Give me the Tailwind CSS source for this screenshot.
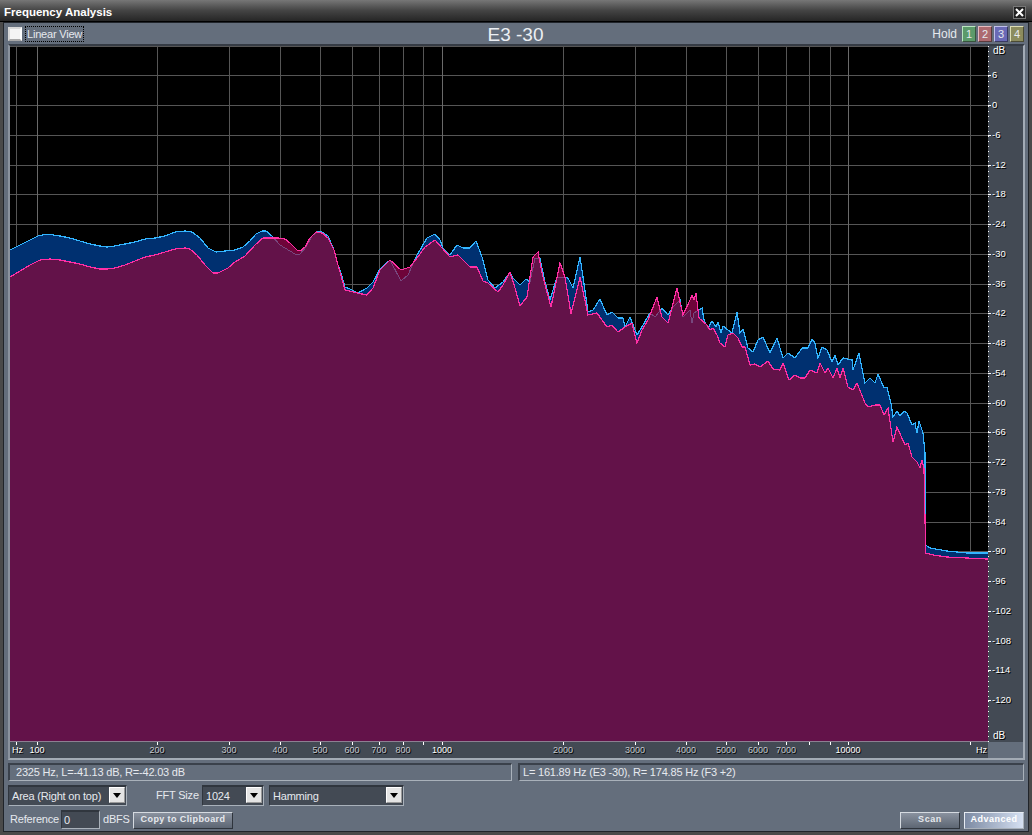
<!DOCTYPE html>
<html lang="en">
<head>
  <meta charset="UTF-8" />
  <title>Frequency Analysis</title>
  <script src="https://cdn.jsdelivr.net/npm/@tailwindcss/browser@4"></script>
</head>
<body class="w-[1032px] h-[835px] overflow-hidden flex flex-col bg-[#4a4a4a] text-[11px] tracking-[-0.2px] whitespace-nowrap text-[#e6e9ee] font-['Liberation_Sans',sans-serif]">

  <!-- Title bar -->
  <header class="h-[22px] shrink-0 flex items-center justify-between pl-[4px] pr-[6px] pt-[4px] bg-linear-to-b from-[#777777] via-[#444444] to-[#262626] border-b border-black">
    <h1 class="font-bold text-[11.5px] tracking-normal text-white">Frequency Analysis</h1>
    <button class="w-[13px] h-[13px] -mt-[1px] flex items-center justify-center bg-[#222222] border border-[#777777]">
      <svg width="9" height="9" viewBox="0 0 9 9"><path d="M1 1L8 8M8 1L1 8" stroke="#fff" stroke-width="2"/></svg>
    </button>
  </header>

  <main class="flex-1 mx-[3px] mb-[3px] pl-[4px] pr-[3px] flex flex-col bg-[#646e7c] border border-[#20242a]">

    <!-- Top row -->
    <div class="h-[21px] shrink-0 relative flex items-center">
      <span class="w-[14px] h-[14px] bg-[#f4f4f4] border-2 border-t-[#d8d8d8] border-l-[#d8d8d8] border-r-white border-b-[#a8a8a8]"></span>
      <span class="ml-[3px] px-[1px] h-[16px] leading-[14px] border border-dotted border-black">Linear View</span>
      <span class="absolute left-0 right-[2px] top-[1px] text-center text-[19px] leading-[22px] tracking-normal text-[#eceff3]">E3 -30</span>
      <span class="ml-auto mr-[5px] text-[12px] tracking-normal">Hold</span>
      <div class="flex gap-[2px] mr-[1px] text-center leading-[14px] text-[11px]">
        <span class="w-[14px] h-[16px] bg-[#5c9a6a] border border-t-[#b9e6c0] border-l-[#b9e6c0] border-r-[#37553d] border-b-[#37553d]">1</span>
        <span class="w-[14px] h-[16px] bg-[#ad6a70] border border-t-[#e6bcc0] border-l-[#e6bcc0] border-r-[#5c3a3d] border-b-[#5c3a3d]">2</span>
        <span class="w-[14px] h-[16px] bg-[#6a6ab6] border border-t-[#c0c0ea] border-l-[#c0c0ea] border-r-[#3a3a62] border-b-[#3a3a62]">3</span>
        <span class="w-[14px] h-[16px] bg-[#8c8c5e] border border-t-[#dcdcb4] border-l-[#dcdcb4] border-r-[#4c4c34] border-b-[#4c4c34]">4</span>
      </div>
    </div>

    <!-- Plot with its scales -->
    <div class="shrink-0 border-2 border-t-[#353b44] border-l-[#8b939e] border-r-[#a3abb5] border-b-[#a3abb5]">
      <div class="flex h-[696px]">
        <svg class="w-[978px] h-[696px] bg-black" viewBox="10 46 978 696" shape-rendering="crispEdges">
          <defs>
            <path id="left" d="M5,253 L10,250 20,245 30,240 38,236 45,234.5 50,234.5 60,236 70,238 80,241 90,244 100,246 107,247 115,246 125,244 135,242 145,239 155,238 165,236 175,232 185,231 192,232 200,238 208,248 216,252 225,251 235,250 243,247 250,241 256,234 262,231 266,231 272,236 280,245 285,248 295,254 300,254 306,247 312,236 317,232 322,232 328,236 334,250 338,265 340,270 345,287 350,289 358,293 367,288 373,282 380,269 390,260 401,281 408,275 417,255 427,238 435,234 440,240 443,248 450,255 457,245 463,248 470,248 476,241 482,257 488,280 495,288 503,282 510,272 513,278 520,285 526,279 530,282 535,258 540,259 545,282 550,300 557,277 568,278 573,288 580,257 583,277 588,312 593,310 600,299 607,315 612,312 618,318 623,318 625,327 630,317 637,335 643,325 650,313 655,317 662,308 668,315 673,307 680,300 683,317 690,310 692,323 694,313 699,310 702,308 704,320 708,328 712,321 716,327 718,322 721,333 723,326 728,330 732,333 737,312 740,333 743,329 748,348 753,352 758,340 763,337 770,353 777,338 783,358 788,353 795,358 802,348 808,348 812,339 815,343 818,358 822,347 827,350 832,362 835,355 838,365 843,358 852,360 853,370 859,353 865,383 870,378 875,383 878,374 884,388 887,387 891,403 893,417 897,411 900,416 904,411 907,413 912,425 915,423 917,433 919,421 923,433 925,453 925.7,545 930,548 947,551 967,553 987,553 995,553 995,760 5,760 Z"/>
            <path id="right" d="M5,280 L10,277 20,271 30,265 40,260 50,259 60,260 70,262 80,264 90,267 100,269 107,269 115,268 125,265 135,261 145,257 155,255 165,252 175,249 185,248 190,249 197,255 205,265 213,273 218,273 228,268 235,262 245,256 255,245 263,238 270,238 278,238 285,239 290,243 297,250 300,251 305,247 310,238 316,232 322,233 328,238 334,250 338,265 340,272 345,290 357,293 367,295 373,288 380,270 390,260 401,270 410,267 417,258 425,247 435,240 442,248 450,257 458,255 470,267 477,267 483,281 488,283 498,292 503,285 510,272 515,288 520,306 527,297 533,257 538,252 543,277 551,307 560,263 565,277 571,314 580,277 588,315 597,313 607,327 612,325 618,332 625,327 632,323 637,343 642,330 648,320 657,297 662,317 668,323 677,288 680,302 683,315 690,300 692,295 694,300 696,293 699,318 707,325 710,330 713,328 717,335 720,343 725,347 728,335 733,333 738,338 742,347 745,347 750,365 755,364 760,367 768,361 773,369 780,370 783,363 789,380 795,375 800,378 805,378 810,370 817,373 820,363 825,373 828,368 833,378 837,368 840,378 843,368 848,387 853,390 857,383 865,403 868,407 875,405 880,405 884,415 888,408 893,442 897,427 905,445 908,443 912,457 917,462 920,468 922,460 924,468 925.7,553 933,555 947,557 967,558 987,559 995,559 995,760 5,760 Z"/>
            <clipPath id="inLeft"><use href="#left"/></clipPath>
            <clipPath id="inRight"><use href="#right"/></clipPath>
          </defs>
          <g id="grid" stroke="#565656"></g>
          <use href="#left" fill="#003070" stroke="#33b5ff" stroke-width="1.2"/>
          <use href="#right" fill="#6e0439"/>
          <use href="#right" fill="#631249" clip-path="url(#inLeft)"/>
          <use href="#left" fill="none" stroke="#77487f" clip-path="url(#inRight)"/>
          <use href="#right" fill="none" stroke="#ff2fa5" stroke-width="1.2"/>
          <path d="M10 741.5H988" stroke="#8d7f92"/>
        </svg>
        <div id="dbScale" class="flex-1 relative bg-[#434a54] overflow-hidden"></div>
      </div>
      <div class="flex h-[16px]">
        <div id="hzScale" class="w-[978px] relative bg-[#434a54]"></div>
      </div>
    </div>

    <!-- Readouts -->
    <div class="h-[18px] mt-[3px] mr-[1px] shrink-0 flex gap-[6px] leading-[15px]">
      <div class="w-[504px] pl-[6px] border-t-2 border-l-2 border-r border-b border-t-[#3a414b] border-l-[#3a414b] border-r-[#a9b1ba] border-b-[#a9b1ba]">2325 Hz, L=-41.13 dB, R=-42.03 dB</div>
      <div class="flex-1 pl-[3px] border-t-2 border-l-2 border-r border-b border-t-[#3a414b] border-l-[#3a414b] border-r-[#a9b1ba] border-b-[#a9b1ba]">L= 161.89 Hz (E3 -30), R= 174.85 Hz (F3 +2)</div>
    </div>

    <!-- Display options -->
    <div class="h-[21px] mt-[4px] shrink-0 flex items-stretch leading-[18px]">
      <div class="w-[119px] flex justify-between pl-[3px] pr-[1px] bg-[#434a54] border-t-2 border-l border-r border-b border-t-[#30363e] border-l-[#30363e] border-r-[#a9b1ba] border-b-[#a9b1ba]">
        <span>Area (Right on top)</span>
        <span class="w-[16px] h-[16px] flex items-center justify-center bg-[#e4e4e4] border border-t-white border-l-white border-r-[#9a9a9a] border-b-[#9a9a9a]">
          <svg width="8" height="5" viewBox="0 0 8 5"><path d="M0 0H8L4 5Z" fill="#000"/></svg>
        </span>
      </div>
      <span class="ml-[29px] w-[46px] leading-[20px]">FFT Size</span>
      <div class="w-[62px] flex justify-between pl-[3px] pr-[1px] bg-[#434a54] border-t-2 border-l border-r border-b border-t-[#30363e] border-l-[#30363e] border-r-[#a9b1ba] border-b-[#a9b1ba]">
        <span>1024</span>
        <span class="w-[16px] h-[16px] flex items-center justify-center bg-[#e4e4e4] border border-t-white border-l-white border-r-[#9a9a9a] border-b-[#9a9a9a]">
          <svg width="8" height="5" viewBox="0 0 8 5"><path d="M0 0H8L4 5Z" fill="#000"/></svg>
        </span>
      </div>
      <div class="ml-[5px] w-[135px] flex justify-between pl-[3px] pr-[1px] bg-[#434a54] border-t-2 border-l border-r border-b border-t-[#30363e] border-l-[#30363e] border-r-[#a9b1ba] border-b-[#a9b1ba]">
        <span>Hamming</span>
        <span class="w-[16px] h-[16px] flex items-center justify-center bg-[#e4e4e4] border border-t-white border-l-white border-r-[#9a9a9a] border-b-[#9a9a9a]">
          <svg width="8" height="5" viewBox="0 0 8 5"><path d="M0 0H8L4 5Z" fill="#000"/></svg>
        </span>
      </div>
    </div>

    <!-- Reference and actions -->
    <div class="h-[20px] mt-[3px] mr-[1px] shrink-0 flex items-center">
      <span class="ml-[2px] w-[51px]">Reference</span>
      <span class="w-[39px] h-[19px] pl-[2px] leading-[16px] bg-[#434a54] border-t-2 border-l border-r border-b border-t-[#30363e] border-l-[#30363e] border-r-[#a9b1ba] border-b-[#a9b1ba]">0</span>
      <span class="ml-[3px] w-[30px]">dBFS</span>
      <button class="w-[100px] h-[17px] mt-[2px] text-[9px] font-bold tracking-[0.4px] bg-linear-to-b from-[#8a929f] to-[#5d6673] border border-t-[#d5dae0] border-l-[#d5dae0] border-r-[#2e343c] border-b-[#2e343c]">Copy to Clipboard</button>
      <button class="ml-auto w-[60px] h-[17px] mt-[2px] text-[9px] font-bold tracking-[0.6px] bg-linear-to-b from-[#8a929f] to-[#5d6673] border border-t-[#d5dae0] border-l-[#d5dae0] border-r-[#2e343c] border-b-[#2e343c]">Scan</button>
      <button class="ml-[4px] w-[60px] h-[17px] mt-[2px] text-[9px] font-bold tracking-[0.5px] text-white bg-linear-to-r from-[#7d8ba3] to-[#d5e0f2] border border-t-[#e6ebf2] border-l-[#e6ebf2] border-r-[#a9b1ba] border-b-[#a9b1ba]">Advanced</button>
    </div>
  </main>

  <script>
    const NS = "http://www.w3.org/2000/svg";
    const grid = document.getElementById("grid");
    const dbScale = document.getElementById("dbScale");
    const hzScale = document.getElementById("hzScale");

    function line(x1, y1, x2, y2, stroke) {
      const l = document.createElementNS(NS, "line");
      l.setAttribute("x1", x1);
      l.setAttribute("y1", y1);
      l.setAttribute("x2", x2);
      l.setAttribute("y2", y2);
      if (stroke) l.setAttribute("stroke", stroke);
      grid.appendChild(l);
    }

    // dB grid and labels, 4.96px per dB
    const dbY = db => Math.round(105 - db * 4.96);
    for (let db = 6; db >= -120; db -= 6) {
      const y = dbY(db);
      line(10, y + 0.5, 988, y + 0.5);
      dbScale.innerHTML += `<span class="absolute left-0 w-[3px] h-[1px] bg-white" style="top:${y - 46}px"></span>`;
      dbScale.innerHTML += `<span class="absolute left-[4px] text-[9.5px] leading-[10px] tracking-normal text-white [text-shadow:1px_1px_0_#000]" style="top:${y - 51}px">${db}</span>`;
    }
    line(10, 46.5, 988, 46.5);
    for (let y = 46; y < 742; y += 5) {
      dbScale.innerHTML += `<span class="absolute left-0 w-[1px] h-[1px] bg-white" style="top:${y - 46}px"></span>`;
    }
    dbScale.innerHTML += `<span class="absolute left-[5px] top-[0px] text-[10px] leading-[10px] tracking-normal text-white [text-shadow:1px_1px_0_#000]">dB</span>`;
    dbScale.innerHTML += `<span class="absolute left-[5px] top-[685px] text-[10px] leading-[10px] tracking-normal text-white [text-shadow:1px_1px_0_#000]">dB</span>`;

    // frequency grid and labels
    const freqs = [16, 37, 157, 229, 280, 320, 352, 379, 403, 423, 442, 563, 635, 686, 726, 758, 786, 809, 830, 848, 970];
    freqs.forEach(x => {
      line(x + 0.5, 46, x + 0.5, 742, [37, 442, 848].includes(x) ? "#6a6a6a" : null);
      hzScale.innerHTML += `<span class="absolute top-0 w-[1px] h-[3px] bg-white" style="left:${x - 10}px"></span>`;
    });
    const labels = [[37, "100"], [157, "200"], [229, "300"], [280, "400"], [320, "500"], [352, "600"], [379, "700"], [403, "800"], [442, "1000"], [563, "2000"], [635, "3000"], [686, "4000"], [726, "5000"], [758, "6000"], [786, "7000"], [848, "10000"]];
    labels.forEach(([x, text]) => {
      const major = text === "100" || text === "1000" || text === "10000";
      const color = major ? "text-white" : "text-[#c3c7cd]";
      hzScale.innerHTML += `<span class="absolute top-[3px] -translate-x-1/2 text-[9px] leading-[11px] tracking-normal ${color} [text-shadow:1px_1px_0_#000]" style="left:${x - 10}px">${text}</span>`;
    });
    hzScale.innerHTML += `<span class="absolute left-[2px] top-[3px] text-[9px] leading-[11px] tracking-normal text-white [text-shadow:1px_1px_0_#000]">Hz</span>`;
    hzScale.innerHTML += `<span class="absolute left-[966px] top-[3px] text-[9px] leading-[11px] tracking-normal text-white [text-shadow:1px_1px_0_#000]">Hz</span>`;
  </script>
</body>
</html>
